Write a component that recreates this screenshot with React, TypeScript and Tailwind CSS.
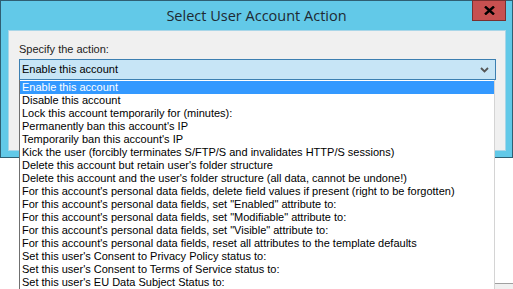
const items = [
  'Enable this account',
  'Disable this account',
  'Lock this account temporarily for (minutes):',
  "Permanently ban this account's IP",
  "Temporarily ban this account's IP",
  'Kick the user (forcibly terminates S/FTP/S and invalidates HTTP/S sessions)',
  "Delete this account but retain user's folder structure",
  "Delete this account and the user's folder structure (all data, cannot be undone!)",
  "For this account's personal data fields, delete field values if present (right to be forgotten)",
  'For this account\'s personal data fields, set "Enabled" attribute to:',
  'For this account\'s personal data fields, set "Modifiable" attribute to:',
  'For this account\'s personal data fields, set "Visible" attribute to:',
  "For this account's personal data fields, reset all attributes to the template defaults",
  "Set this user's Consent to Privacy Policy status to:",
  "Set this user's Consent to Terms of Service status to:",
  "Set this user's EU Data Subject Status to:",
];

export default function App() {
  return (
    <div className="relative w-[513px] h-[289px] overflow-hidden bg-white font-['Liberation_Sans',sans-serif] text-black">
      {/* Window frame */}
      <div className="w-[513px] h-[158px] bg-[#62c9e8] border border-[#2f5f73] flex flex-col">
        <div className="h-[29px] flex items-start relative">
          <div className="flex-1 text-center pt-[4px] text-[14.5px] text-[#1e2a33] font-['Open_Sans',sans-serif]">
            Select User Account Action
          </div>
          <div className="absolute right-[6px] top-[-1px] w-[34px] h-[21px] bg-[#c75050] border border-[#7a3030] flex items-center justify-center">
            <svg width="11" height="9" viewBox="0 0 11 9">
              <path d="M1 0.5 L10 8.5 M10 0.5 L1 8.5" stroke="#000" strokeWidth="2.4" />
            </svg>
          </div>
        </div>
        <div className="ml-[7px] mr-[6px] h-[121px] bg-[#f0f0f0] border border-[#a9d6e8] px-[10px] pt-[11px]">
          <div className="text-[11px] leading-[14px] h-[17px] text-[#222]">Specify the action:</div>
          <div className="h-[21px] w-[477px] bg-[#c7e5f6] border border-[#3c7fb1] flex items-center justify-between pl-[2px] pr-[6px] text-[11px]">
            <span>Enable this account</span>
            <svg width="9" height="6" viewBox="0 0 9 6">
              <path d="M1 1 L4.5 4.5 L8 1" stroke="#555" strokeWidth="1.8" fill="none" />
            </svg>
          </div>
        </div>
      </div>

      {/* Dropdown list */}
      <div className="absolute left-[19px] top-[80px] w-[476px] h-[220px] bg-white border-l border-[#707070] border-r border-r-[#d4d4d4] pt-[1px]">
        {items.map((t, i) => (
          <div
            key={i}
            className={
              'h-[13px] leading-[13px] pl-[2px] text-[11px] whitespace-nowrap ' +
              (i === 0 ? 'bg-[#3399ff] text-white' : 'text-black')
            }
          >
            {t}
          </div>
        ))}
      </div>
      <div className="absolute left-[495px] top-[283px] w-[18px] h-[6px] bg-[#f0f0f0] border-t border-[#a0a0a0]" />
    </div>
  );
}
